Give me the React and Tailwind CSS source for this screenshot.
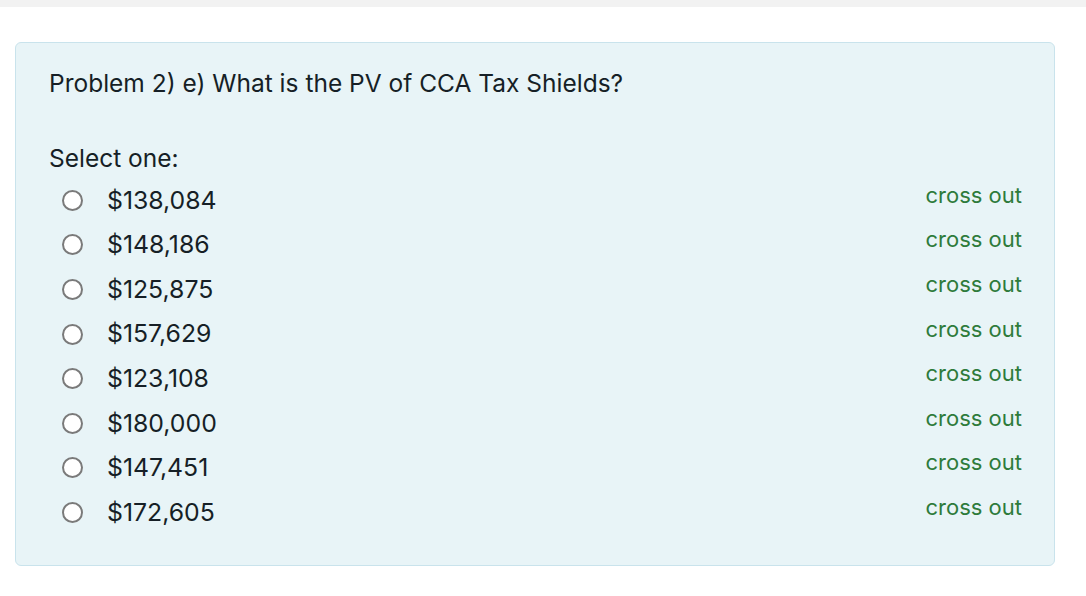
import React from "react";

const options = [
  "$138,084",
  "$148,186",
  "$125,875",
  "$157,629",
  "$123,108",
  "$180,000",
  "$147,451",
  "$172,605",
];

export default function App() {
  return (
    <div className="min-h-screen bg-white" style={{ fontFamily: "Inter, 'Liberation Sans', sans-serif" }}>
      <div className="h-[7px] bg-[#f2f2f2]" />
      <div className="pt-[35px] pl-[15px] pr-[31px]">
        <div className="rounded-md border border-[#c9e3ec] bg-[#e8f4f7] pl-[33px] pr-[32px] pt-[26px] pb-[30px] text-[#161f26]">
          <p className="text-[24.5px] leading-[28px]">Problem 2) e) What is the PV of CCA Tax Shields?</p>
          <p className="mt-[47px] text-[24.5px] leading-[28px]">Select one:</p>
          <div className="mt-[6px] flex flex-col">
            {options.map((o, i) => (
              <div key={i} className="flex h-[44.6px] items-center justify-between">
                <label className="flex items-center pl-[13px]">
                  <span className="h-[21px] w-[21px] rounded-full border-[2px] border-[#7a7a7a] bg-white" />
                  <span className="ml-[24px] text-[24.8px]">{o}</span>
                </label>
                <span className="-mt-[10px] text-[22px] text-[#2e7b3b]">cross out</span>
              </div>
            ))}
          </div>
        </div>
      </div>
    </div>
  );
}
